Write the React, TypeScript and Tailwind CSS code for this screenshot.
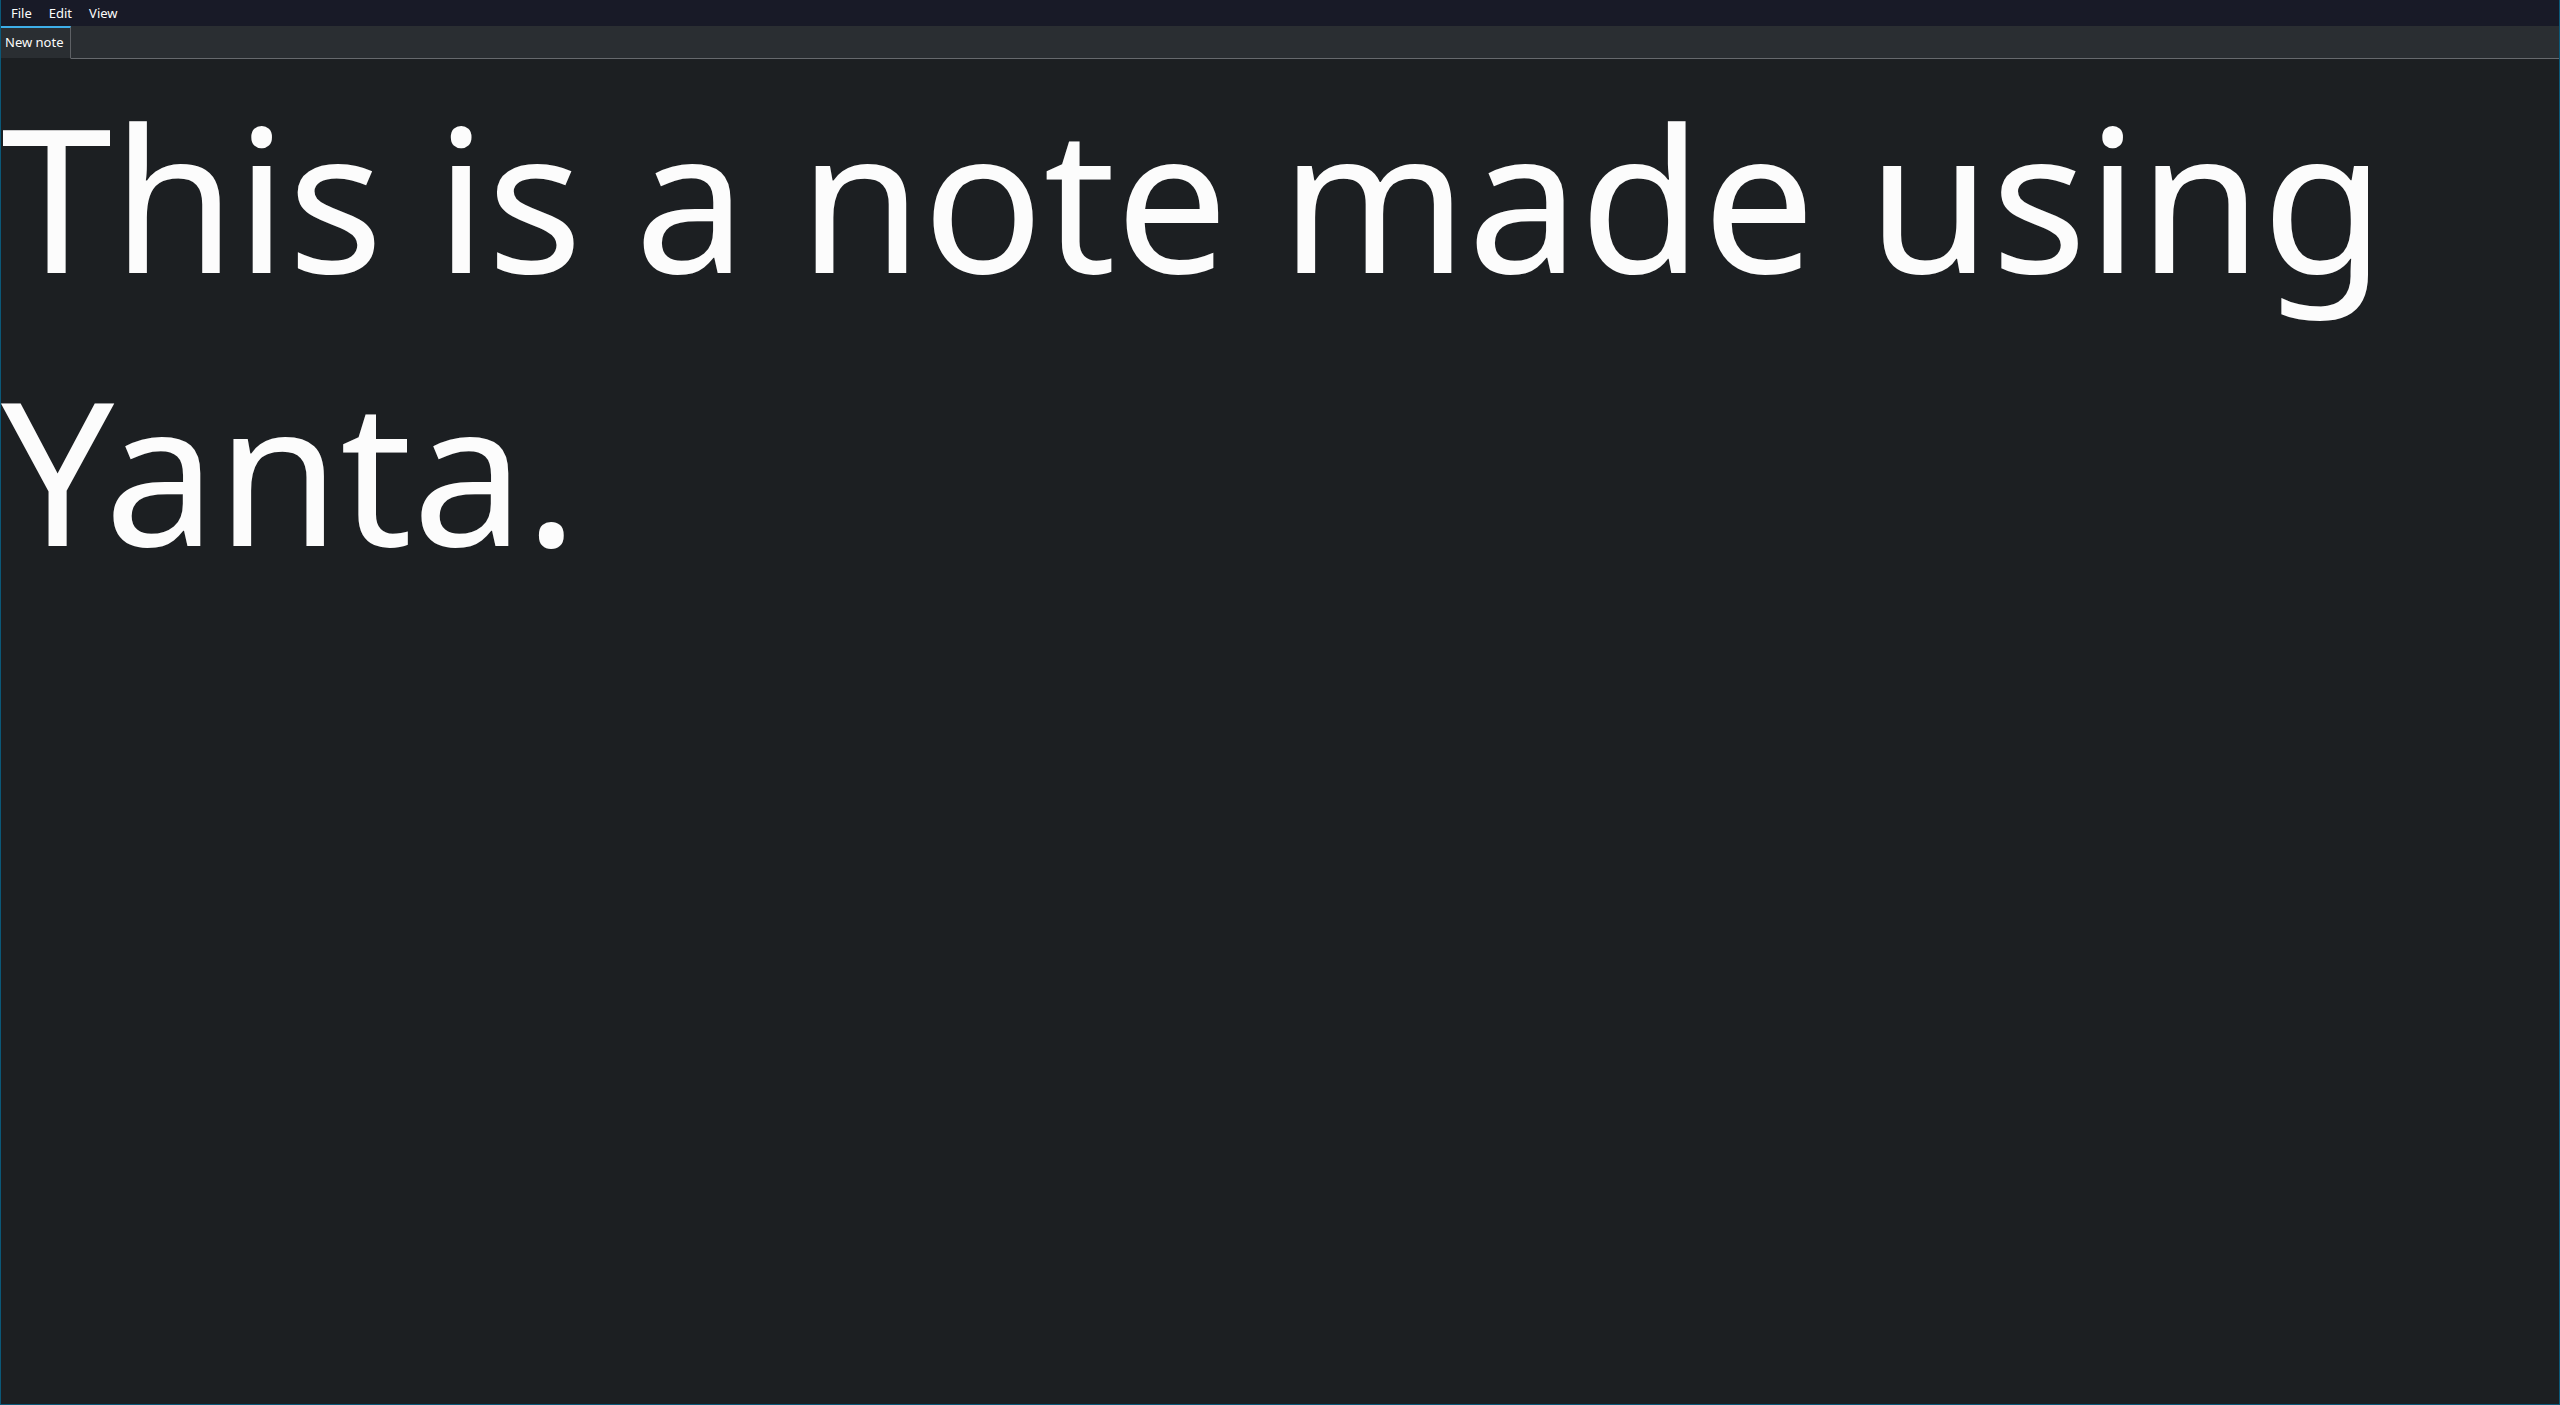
import React from "react";

const menus = ["File", "Edit", "View"];

const App = () => {
	return (
		<div className="flex h-[1405px] w-full flex-col border-x border-b border-[#0b5878] bg-[#1c1f22]">
			<div className="flex h-[26px] items-center bg-[#181a27] pl-[2px] font-['Noto_Sans',sans-serif] text-[13px] text-[#fcfcfc]">
				{menus.map((m) => (
					<span key={m} className="px-[8px] pr-[9px] leading-[26px]">
						{m}
					</span>
				))}
			</div>

			<div className="flex h-[33px] bg-[#2a2e32] font-['Noto_Sans',sans-serif] text-[13px] text-[#fcfcfc]">
				<div className="flex w-[70px] items-center border-t-2 border-r border-b border-t-[#3daee9] border-r-[#5e6165] border-b-[#1c1f22] pl-[4px]">
					New note
				</div>
				<div className="flex-1 border-b border-[#66696d]" />
			</div>

			<div className="flex-1 overflow-hidden bg-[#1c1f22]">
				<p className="font-['Noto_Sans',sans-serif] text-[200px] leading-[273px] text-[#fcfcfc]">
					This is a note made using Yanta.
				</p>
			</div>
		</div>
	);
};

export default App;
